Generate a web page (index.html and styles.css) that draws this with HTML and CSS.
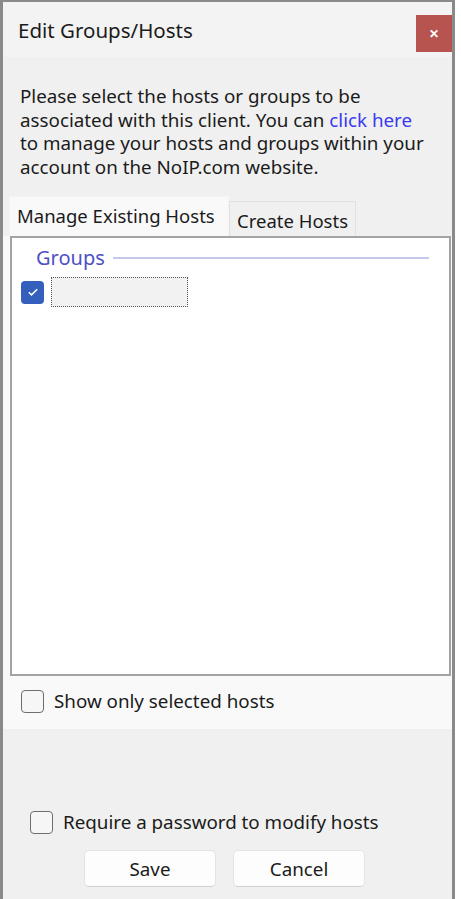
FILE: index.html
```html
<!DOCTYPE html>
<html lang="en">
<head>
    <meta charset="UTF-8">
    <meta name="viewport" content="width=device-width, initial-scale=1.0">
    <title>Edit Groups/Hosts</title>
    <link rel="stylesheet" href="styles.css">
</head>
<body>
    <div class="window">
        <div class="titlebar">
            <span class="title">Edit Groups/Hosts</span>
            <button class="close">&#x2715;</button>
        </div>
        <div class="main">
            <p class="intro">Please select the hosts or groups to be<br>associated with this client. You can <a href="#">click here</a><br>to manage your hosts and groups within your<br>account on the NoIP.com website.</p>
            <div class="tabs">
                <div class="tab active">Manage Existing Hosts</div>
                <div class="tab">Create Hosts</div>
            </div>
            <div class="panel">
                <div class="list">
                    <div class="group-head">
                        <span>Groups</span>
                        <span class="rule"></span>
                    </div>
                    <div class="item">
                        <span class="check on">
                            <svg width="14" height="14" viewBox="0 0 14 14"><path d="M2.8 7.3l2.7 2.6L11.2 4.3" fill="none" stroke="#fff" stroke-width="1.5"/></svg>
                        </span>
                        <span class="item-label"></span>
                    </div>
                </div>
                <label class="opt"><span class="check"></span>Show only selected hosts</label>
            </div>
            <div class="footer">
                <label class="opt"><span class="check"></span>Require a password to modify hosts</label>
                <div class="buttons">
                    <button class="btn">Save</button>
                    <button class="btn">Cancel</button>
                </div>
            </div>
        </div>
    </div>
</body>
</html>
```

FILE: styles.css
```css
body {
    margin: 0;
    padding: 0;
    background-color: #ffffff;
    font-family: "Noto Sans", "Open Sans", sans-serif;
    color: #1b1b1b;
}
.window {
    width: 449px;
    height: 897px;
    border-left: 3px solid #8a8a8a;
    border-right: 3px solid #8a8a8a;
    border-top: 2px solid #8a8a8a;
    display: flex;
    flex-direction: column;
    background-color: #f0f0f0;
}
.titlebar {
    height: 55px;
    background-color: #f3f3f3;
    display: flex;
    align-items: flex-start;
    justify-content: space-between;
}
.title {
    font-size: 20.5px;
    line-height: 24px;
    margin: 16px 0 0 15px;
}
.close {
    width: 36px;
    height: 37px;
    margin-top: 13px;
    border: none;
    background-color: #b85450;
    color: #fff;
    font-size: 12px;
    font-weight: bold;
    padding: 0;
}
.main {
    flex: 1;
    display: flex;
    flex-direction: column;
}
.intro {
    margin: 28px 0 0 17px;
    font-size: 18.8px;
    line-height: 23.5px;
}
.intro a {
    color: #3a3af0;
    text-decoration: none;
}
.tabs {
    display: flex;
    align-items: flex-end;
    margin: 17px 0 0 6px;
}
.tab {
    font-size: 18.5px;
    height: 35px;
    line-height: 37px;
    padding: 0 7px;
    border: 1px solid #e2e2e2;
    border-bottom: none;
    background-color: #f0f0f0;
    box-sizing: border-box;
}
.tab.active {
    height: 40px;
    line-height: 37px;
    background-color: #f9f9f9;
    border-color: #f4f4f4;
    width: 220px;
}
.panel {
    background-color: #f9f9f9;
    height: 493px;
    padding: 0 1px 0 7px;
    display: flex;
    flex-direction: column;
}
.list {
    height: 440px;
    background-color: #fff;
    border: 2px solid #a3a3a3;
    box-sizing: border-box;
}
.group-head {
    display: flex;
    align-items: center;
    margin: 5px 20px 0 24px;
    color: #4f50c4;
    font-size: 20px;
    line-height: 30px;
}
.rule {
    flex: 1;
    height: 2px;
    background-color: #c3c9e8;
    margin: 0 0 0 8px;
}
.item {
    display: flex;
    align-items: center;
    margin: 4px 0 0 9px;
}
.check {
    width: 23px;
    height: 23px;
    border: 1.5px solid #6e6e6e;
    border-radius: 4px;
    box-sizing: border-box;
    background-color: #f6f6f6;
    display: inline-flex;
    align-items: center;
    justify-content: center;
    flex-shrink: 0;
}
.check.on {
    border: none;
    background-color: #355fbd;
}
.item-label {
    width: 137px;
    height: 30px;
    margin-left: 7px;
    background: #f2f2f2;
    outline: 1px dotted #555;
    outline-offset: -1px;
}
.opt {
    display: flex;
    align-items: center;
    font-size: 18.8px;
    margin: 12px 0 0 11px;
}
.opt .check {
    margin-right: 10px;
}
.footer {
    display: flex;
    flex-direction: column;
    padding: 80px 0 0 27px;
}
.footer .opt {
    margin: 0;
}
.buttons {
    display: flex;
    gap: 17px;
    margin: 15px 0 0 54px;
}
.btn {
    width: 132px;
    height: 37px;
    background-color: #fdfdfd;
    border: 1px solid #e3e3e3;
    border-bottom-color: #cfcfcf;
    border-radius: 5px;
    font-family: "Noto Sans", "Open Sans", sans-serif;
    font-size: 18.8px;
    color: #1b1b1b;
    padding: 0;
}
```
